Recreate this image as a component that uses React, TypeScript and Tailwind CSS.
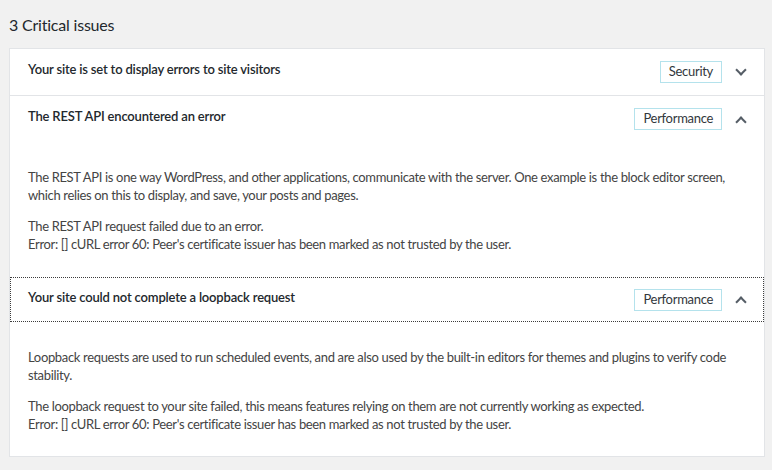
import React from "react";

const font = { fontFamily: '"Lato", "Liberation Sans", sans-serif' };

function Chevron({ up }: { up?: boolean }) {
  return (
    <div className="ml-[13px] flex h-[12px] w-[12px] items-center justify-center">
      {up ? (
        <div className="mt-[5px] h-[8px] w-[8px] -rotate-[135deg] border-r-2 border-b-2 border-[#555d66]" />
      ) : (
        <div className="-mt-[4px] h-[8px] w-[8px] rotate-45 border-r-2 border-b-2 border-[#555d66]" />
      )}
    </div>
  );
}

function Badge({ label }: { label: string }) {
  return (
    <span className="flex h-[22px] items-center border border-[#b4e2ec] px-[8px] text-[13px] tracking-[-0.3px] text-[#32373c]">
      {label}
    </span>
  );
}

function Header({ title, badge, up, focused }: { title: string; badge: string; up?: boolean; focused?: boolean }) {
  return (
    <div
      className={
        focused
          ? "flex h-[45px] items-center border border-dotted border-[#3c3c3c] pl-[17px] pr-[16px]"
          : "flex h-[46px] items-center pl-[18px] pr-[17px]"
      }
    >
      <div className="flex-1 -translate-y-[2px] text-[13px] font-semibold tracking-[-0.18px] text-[#23282d]">{title}</div>
      <Badge label={badge} />
      <Chevron up={up} />
    </div>
  );
}

function Para({ lines }: { lines: string[] }) {
  return (
    <p className="my-[13px] text-[13px] leading-[18px] tracking-[-0.34px] text-[#444]">
      {lines.map((l, i) => (
        <span key={i} className="block whitespace-nowrap">
          {l}
        </span>
      ))}
    </p>
  );
}

export default function App() {
  return (
    <div className="min-h-[470px] bg-[#f1f1f1] pl-[9px] pr-[7px] pt-[13px]" style={font}>
      <h3 className="mb-[11px] h-[24px] text-[16px] leading-[24px] tracking-[-0.2px] text-[#23282d]">3 Critical issues</h3>
      <div className="border border-[#e2e4e7] bg-white">
        <div className="border-b border-[#e2e4e7]">
          <Header title="Your site is set to display errors to site visitors" badge="Security" />
        </div>
        <div>
          <Header title="The REST API encountered an error" badge="Performance" up />
          <div className="pl-[18px] pr-[17px] pt-[13px] pb-[11px]">
            <Para
              lines={[
                "The REST API is one way WordPress, and other applications, communicate with the server. One example is the block editor screen,",
                "which relies on this to display, and save, your posts and pages.",
              ]}
            />
            <Para
              lines={[
                "The REST API request failed due to an error.",
                "Error: [] cURL error 60: Peer's certificate issuer has been marked as not trusted by the user.",
              ]}
            />
          </div>
        </div>
        <div>
          <Header title="Your site could not complete a loopback request" badge="Performance" up focused />
          <div className="pl-[18px] pr-[17px] pt-[13px] pb-[10px]">
            <Para
              lines={[
                "Loopback requests are used to run scheduled events, and are also used by the built-in editors for themes and plugins to verify code",
                "stability.",
              ]}
            />
            <Para
              lines={[
                "The loopback request to your site failed, this means features relying on them are not currently working as expected.",
                "Error: [] cURL error 60: Peer's certificate issuer has been marked as not trusted by the user.",
              ]}
            />
          </div>
        </div>
      </div>
    </div>
  );
}
